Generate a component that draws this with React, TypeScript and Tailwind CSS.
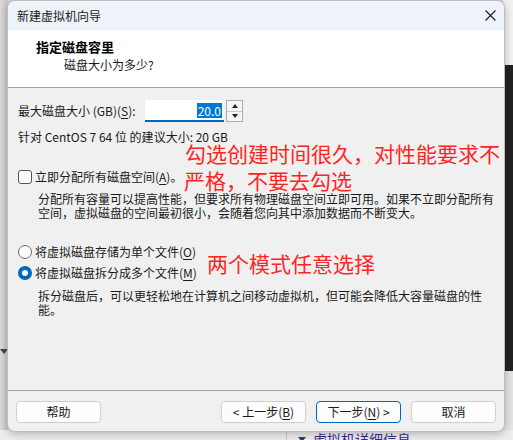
import React from 'react';

const FONT = { fontFamily: '"Noto Sans CJK SC", "Noto Sans", sans-serif' };

function U({ c }: { c: string }) {
  return <span className="underline underline-offset-2">{c}</span>;
}

function Btn({ children, primary }: { children: React.ReactNode; primary?: boolean }) {
  return (
    <button
      className={`w-[85px] h-[22px] rounded-[4px] bg-[#fdfdfd] text-[12px] text-[#1a1a1a] leading-none flex items-center justify-center border ${
        primary ? 'border-[#0067c0]' : 'border-[#d0d0d0]'
      }`}
    >
      {children}
    </button>
  );
}

export default function App() {
  return (
    <div className="relative w-[513px] h-[440px] overflow-hidden bg-[#d6d6d6]" style={FONT}>
      {/* desktop behind the dialog */}
      <div className="absolute left-0 top-0 w-[8px] h-[440px] bg-gradient-to-r from-[#dcdcdc] to-[#c8c8c8]" />
      <div className="absolute left-0 top-[349px] w-0 h-0 border-l-[4px] border-r-[4px] border-t-[5px] border-l-transparent border-r-transparent border-t-[#3c4a5a]" />
      <div className="absolute right-0 top-0 w-[10px] h-[65px] bg-[#f2f2f2]" />
      <div className="absolute right-0 top-[65px] w-[10px] h-[306px] bg-[#222222]" />
      <div className="absolute right-0 top-[371px] w-[10px] h-[69px] bg-[#e4e4e4]" />
      <div className="absolute left-0 top-[430px] w-[513px] h-[10px] bg-[#eeeeee]" />
      <div className="absolute left-[286px] top-[430px] w-px h-[10px] bg-[#c8c8c8]" />
      <div className="absolute left-[298px] top-[437px] w-0 h-0 border-l-[4px] border-r-[4px] border-t-[5px] border-l-transparent border-r-transparent border-t-[#3a3a6a]" />
      <div className="absolute left-[313px] top-[432px] text-[14px] leading-none text-[#3b2d8c] whitespace-nowrap">虚拟机详细信息</div>

      {/* dialog */}
      <div className="relative ml-[7px] w-[498px] h-[432px] rounded-[8px] border border-[#bdbdbd] bg-[#f0f0f0] overflow-hidden flex flex-col shadow-[0_2px_8px_rgba(0,0,0,0.25)]">
        <div className="h-[29px] bg-[#eef2f9] flex items-center justify-between pl-[9px] pr-[8px]">
          <span className="text-[12px] text-[#1a1a1a]">新建虚拟机向导</span>
          <svg width="11" height="11" viewBox="0 0 11 11">
            <path d="M0.5 0.5 L10.5 10.5 M10.5 0.5 L0.5 10.5" stroke="#1a1a1a" strokeWidth="1.1" />
          </svg>
        </div>
        <div className="h-[58px] bg-white border-b border-[#a0a0a0] pt-[8px]">
          <div className="pl-[28px] text-[13px] font-bold text-black leading-[18px]">指定磁盘容里</div>
          <div className="pl-[56px] text-[12px] text-[#1a1a1a] leading-[17px]">磁盘大小为多少?</div>
        </div>

        <div className="flex-1 pl-[10px] pt-[12px] text-[12px] text-[#1a1a1a] border-b border-[#a0a0a0]">
          <div className="flex items-center h-[22px]">
            <span className="w-[127px] whitespace-nowrap">
              最大磁盘大小 (GB)(<U c="S" />):
            </span>
            <div className="w-[79px] h-[22px] bg-white border-b-2 border-[#0067c0] flex items-center justify-end pr-[2px]">
              <span className="bg-[#0078d7] text-white leading-[15px] px-px">20.0</span>
            </div>
            <div className="ml-[2px] w-[17px] h-[22px] border border-[#adadad] bg-[#f5f5f5] flex flex-col">
              <div className="flex-1 flex items-center justify-center border-b border-[#c8c8c8]">
                <div className="w-0 h-0 border-l-[3px] border-r-[3px] border-b-[4px] border-l-transparent border-r-transparent border-b-[#222]" />
              </div>
              <div className="flex-1 flex items-center justify-center">
                <div className="w-0 h-0 border-l-[3px] border-r-[3px] border-t-[4px] border-l-transparent border-r-transparent border-t-[#222]" />
              </div>
            </div>
          </div>

          <div className="mt-[7px] leading-[16px] whitespace-nowrap">针对 CentOS 7 64 位 的建议大小: 20 GB</div>

          <div className="mt-[24px] flex items-center h-[16px]">
            <div className="w-[14px] h-[14px] rounded-[3px] border border-[#555] bg-[#fbfbfb]" />
            <span className="ml-[3px] whitespace-nowrap">
              立即分配所有磁盘空间(<U c="A" />)。
            </span>
          </div>
          <div className="mt-[7px] pl-[20px] leading-[14px] whitespace-nowrap">
            分配所有容量可以提高性能，但要求所有物理磁盘空间立即可用。如果不立即分配所有
            <br />
            空间，虚拟磁盘的空间最初很小，会随着您向其中添加数据而不断变大。
          </div>

          <div className="mt-[22px] flex items-center h-[20px]">
            <div className="w-[14px] h-[14px] rounded-full border border-[#6b6b6b] bg-[#fbfbfb]" />
            <span className="ml-[3px] whitespace-nowrap">
              将虚拟磁盘存储为单个文件(<U c="O" />)
            </span>
          </div>
          <div className="mt-[1px] flex items-center h-[20px]">
            <div className="w-[14px] h-[14px] rounded-full bg-[#0067c0] flex items-center justify-center">
              <div className="w-[6px] h-[6px] rounded-full bg-white" />
            </div>
            <span className="ml-[3px] whitespace-nowrap">
              将虚拟磁盘拆分成多个文件(<U c="M" />)
            </span>
          </div>
          <div className="mt-[6px] pl-[20px] leading-[14px] whitespace-nowrap">
            拆分磁盘后，可以更轻松地在计算机之间移动虚拟机，但可能会降低大容量磁盘的性
            <br />
            能。
          </div>
        </div>

        <div className="h-[40px] flex items-start pt-[10px] pl-[8px] pr-[8px]">
          <Btn>帮助</Btn>
          <div className="flex-1" />
          <div className="flex gap-[10px]">
            <Btn>
              &lt; 上一步(<U c="B" />)
            </Btn>
            <Btn primary>
              下一步(<U c="N" />) &gt;
            </Btn>
            <Btn>取消</Btn>
          </div>
        </div>
      </div>

      {/* red annotations drawn over the screenshot */}
      <div className="absolute left-[185px] top-[140px] text-[21px] leading-[27px] text-[#ff2424] whitespace-nowrap">
        勾选创建时间很久，对性能要求不
        <br />
        <span className="-ml-[1px]">严格，不要去勾选</span>
      </div>
      <div className="absolute left-[207px] top-[250px] text-[21px] leading-[27px] text-[#ff2424] whitespace-nowrap">
        两个模式任意选择
      </div>
    </div>
  );
}
